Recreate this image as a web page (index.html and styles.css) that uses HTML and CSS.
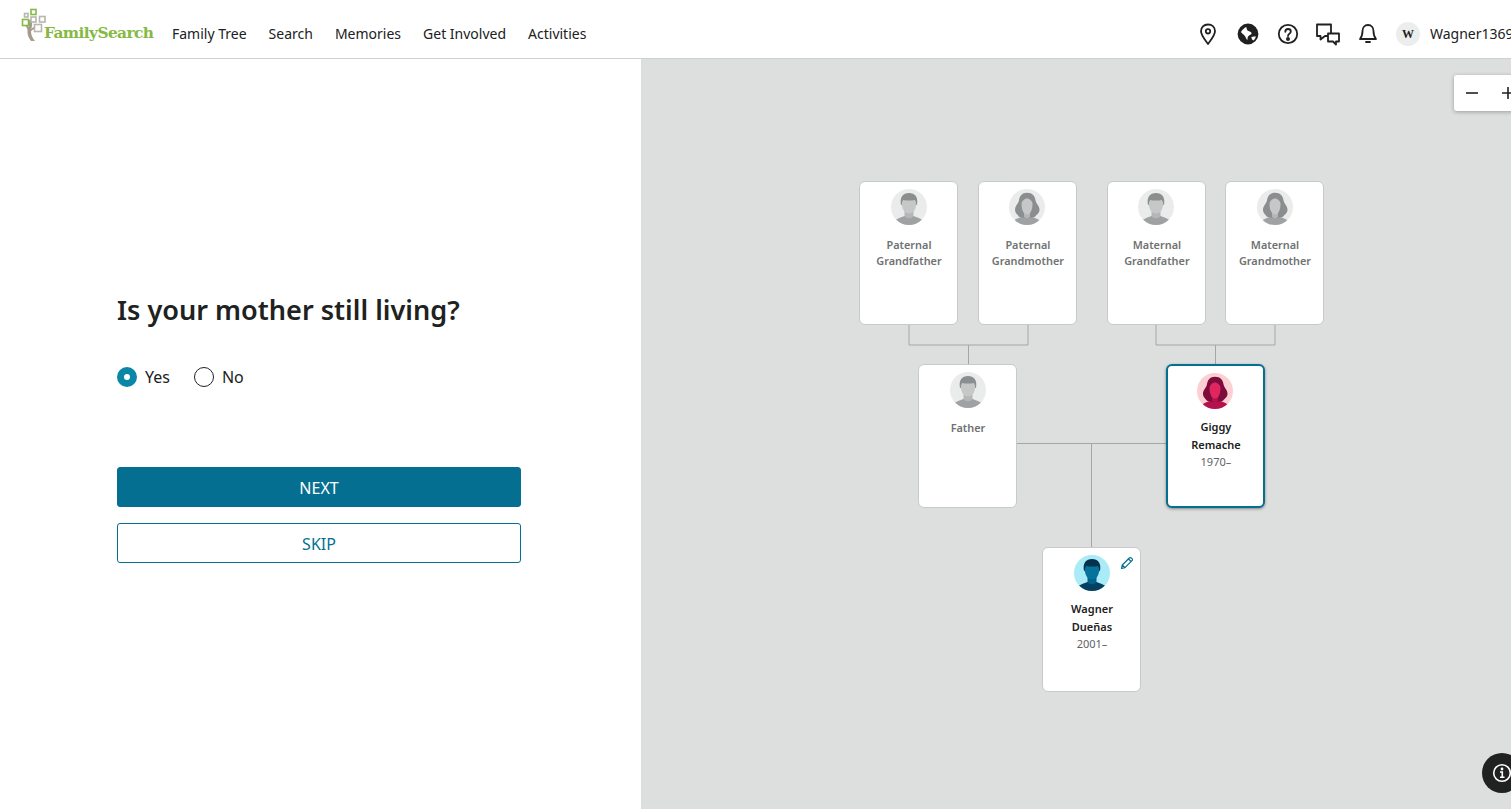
FILE: index.html
```html
<!DOCTYPE html>
<html lang="en">
<head>
    <meta charset="UTF-8">
    <meta name="viewport" content="width=device-width, initial-scale=1.0">
    <title>FamilySearch</title>
    <link rel="stylesheet" href="styles.css">
</head>
<body>
    <!-- shared avatar drawings -->
    <svg class="defs" width="0" height="0">
        <symbol id="man" viewBox="0 0 36 36">
            <path class="a-body" d="M4 31.500c2-2 6-3 9.500-4.500h9c3.500 1.500 7.500 2.500 9.500 4.500a18 18 0 0 1-28 0z"/>
            <path class="a-neck" d="M13.500 20h9v7c-1.500 3-7.500 3-9 0z"/>
            <path class="a-face" d="M10.500 12c0-3 15-3 15 0 0 7-2.500 12.500-7.500 12.500S10.500 19 10.500 12z"/>
            <path class="a-hair" d="M10 16c-1.500-8 2-12 8-12s9.500 4 8 12h-.8c0-2.500-.5-4-1.500-5-3 .8-8.400.8-11.400 0-1 1-1.500 2.500-1.500 5z"/>
        </symbol>
        <symbol id="woman" viewBox="0 0 36 36">
            <path class="a-body" d="M5 32c2-2.500 5-3 9-4.500h8c4 1.500 7 2 9 4.500a18 18 0 0 1-26 0z"/>
            <path class="a-hair" d="M18 3.700c5.500 0 8 3.500 8.500 7.500.3 3 4 5.500 4 9.500 0 3.500-3 4.800-4.500 7-4 1.500-12 1.500-16 0-1.500-2.200-4-3.500-4-7 0-4 3.700-6.500 4-9.500.5-4 3-7.500 8-7.500z"/>
            <path class="a-neck" d="M15 22h6v5.500c-1 2-5 2-6 0z"/>
            <path class="a-face" d="M12.500 15c0-3 3-5.500 5.500-5.500s5.500 2.500 5.500 5.500c0 5.500-2 10.500-5.500 10.500s-5.500-5-5.500-10.500z"/>
        </symbol>
    </svg>

    <header class="topbar">
        <div class="topbar-left">
            <a class="logo" href="#">
                <svg class="logo-tree" width="32" height="44" viewBox="0 0 32 44">
                    <path class="trunk" d="M11 20c1.500 3 1.500 5 .5 8-1 4-.5 8 3.500 13h-4c-2.500-3-4-7-3.500-11 .2-1.500-2-4-3-5l1-1c1 .8 2 2 3 3 .5-2 .3-4-.5-7z"/>
                    <path class="trunk" d="M11 29c1-1 3-2 4-3l1 1c-1 1-3 3-5 4z"/>
                    <rect class="sq-green" x="11" y="9.500" width="5" height="5"/>
                    <rect class="sq-grey" x="4.500" y="13.500" width="3.500" height="3.500"/>
                    <rect class="sq-grey" x="11" y="17" width="5" height="5"/>
                    <rect class="sq-grey" x="19.500" y="16.500" width="5.500" height="5.500"/>
                    <rect class="sq-green" x="2.500" y="19.500" width="6" height="6"/>
                    <rect class="sq-grey" x="14.500" y="24.500" width="7" height="7"/>
                </svg>
                <span class="logo-text">FamilySearch</span>
            </a>
            <nav class="mainnav">
                <a href="#">Family Tree</a>
                <a href="#">Search</a>
                <a href="#">Memories</a>
                <a href="#">Get Involved</a>
                <a href="#">Activities</a>
            </nav>
        </div>
        <div class="tools">
            <svg class="tool" viewBox="0 0 24 24"><path d="M12 2.500c-4.200 0-7 2.800-7 6.800 0 4 3.800 8.400 7 12.700 3.200-4.300 7-8.700 7-12.700 0-4-2.800-6.800-7-6.800z"/><circle cx="12" cy="9.300" r="2.200"/></svg>
            <svg class="tool" viewBox="0 0 24 24"><circle class="fill" cx="12" cy="12" r="9.500"/><path class="cut" d="M5 10c1-2 3-4 5-5 1 1 .5 2.500 1.500 3.500s3.500 1 4 2.500-2 2-3 3-1 2.500-1 4c-1.500-.5-1.500-3-3-4.500S6 11.500 5 10z"/><path class="cut" d="M15.500 15c1.500-.5 3-.5 4.500-.5-.5 1.500-1.500 3-2.500 4-1-.5-2.500-2-2-3.500z"/></svg>
            <svg class="tool" viewBox="0 0 24 24"><circle cx="12" cy="12" r="9.200"/><path d="M9.300 9.800c0-1.700 1.200-2.800 2.800-2.800s2.700 1 2.700 2.400c0 2.200-2.800 2.200-2.800 4.600"/><circle class="fill" cx="12" cy="17" r="1.100"/></svg>
            <svg class="tool" viewBox="0 0 24 24"><path d="M1 2.500h14v11.500h-6l-4.500 3.500v-3.500h-3.500z"/><path class="over" d="M12 11.500h11v8h-3v3l-3-3h-5z"/></svg>
            <svg class="tool" viewBox="0 0 24 24"><path d="M12 3c-3.500 0-5.500 2.700-5.500 6 0 4-.8 6-2.500 8h16c-1.700-2-2.500-4-2.500-8 0-3.300-2-6-5.500-6z"/><path d="M10 20h4"/></svg>
            <span class="user-badge">W</span>
            <span class="user-name">Wagner1369</span>
        </div>
    </header>

    <main class="page">
        <section class="question">
            <h1>Is your mother still living?</h1>
            <div class="choices">
                <label class="choice"><input type="radio" name="living" checked> Yes</label>
                <label class="choice"><input type="radio" name="living"> No</label>
            </div>
            <div class="actions">
                <button class="btn btn-next">NEXT</button>
                <button class="btn btn-skip">SKIP</button>
            </div>
        </section>

        <section class="tree">
            <div class="zoombox">
                <svg width="14" height="14" viewBox="0 0 14 14"><path d="M1 7h12"/></svg>
                <svg width="14" height="14" viewBox="0 0 14 14"><path d="M1 7h12M7 1v12"/></svg>
            </div>

            <!-- connector lines -->
            <svg class="lines" width="870" height="751">
                <path d="M268 266v20h119v-20M327.500 286v20"/>
                <path d="M515 266v20h119v-20M574.500 286v20"/>
                <path d="M376 384.500h149M450.500 384.500v104"/>
            </svg>

            <div class="card card-pgf">
                <svg class="avatar avatar-grey"><use href="#man"/></svg>
                <p class="role">Paternal Grandfather</p>
            </div>
            <div class="card card-pgm">
                <svg class="avatar avatar-grey"><use href="#woman"/></svg>
                <p class="role">Paternal Grandmother</p>
            </div>
            <div class="card card-mgf">
                <svg class="avatar avatar-grey"><use href="#man"/></svg>
                <p class="role">Maternal Grandfather</p>
            </div>
            <div class="card card-mgm">
                <svg class="avatar avatar-grey"><use href="#woman"/></svg>
                <p class="role">Maternal Grandmother</p>
            </div>
            <div class="card card-father">
                <svg class="avatar avatar-grey"><use href="#man"/></svg>
                <p class="role">Father</p>
            </div>
            <div class="card card-mother">
                <svg class="avatar avatar-red"><use href="#woman"/></svg>
                <p class="name">Giggy Remache</p>
                <p class="years">1970–</p>
            </div>
            <div class="card card-self">
                <svg class="pencil" width="14" height="14" viewBox="0 0 14 14"><path d="M1.500 12.500l.8-3.500 7-7c.6-.6 1.500-.6 2 0l.7.700c.6.600.6 1.400 0 2l-7 7zM2.300 9l2.700 2.700M8.500 3l2.500 2.500"/></svg>
                <svg class="avatar avatar-blue"><use href="#man"/></svg>
                <p class="name">Wagner Dueñas</p>
                <p class="years">2001–</p>
            </div>

            <div class="infobtn">
                <svg width="20" height="20" viewBox="0 0 20 20"><circle cx="10" cy="10" r="8.300"/><circle class="dot" cx="10" cy="6" r="1.400"/><path d="M8 9h2.300v5M8 14.200h4.500"/></svg>
            </div>
        </section>
    </main>
</body>
</html>
```

FILE: styles.css
```css
html, body {
    margin: 0;
    height: 100%;
    overflow: hidden;
}
body {
    font-family: "Noto Sans", sans-serif;
    color: #202121;
    background: #fff;
}
.defs {
    position: absolute;
}
p, h1 {
    margin: 0;
}
a {
    color: inherit;
    text-decoration: none;
}

/* top bar */
.topbar {
    display: grid;
    grid-template-columns: 1196px 1fr;
    height: 58px;
    border-bottom: 1px solid #cfd1d0;
    box-sizing: content-box;
}
.topbar-left {
    display: flex;
    align-items: flex-start;
}
.logo {
    display: flex;
    width: 172px;
    flex: none;
    padding-left: 20px;
    box-sizing: border-box;
}
.logo-tree {
    margin-right: -8px;
    flex: none;
}
.logo-text {
    font-family: "DejaVu Serif", serif;
    font-weight: 700;
    font-size: 15.4px;
    letter-spacing: -0.6px;
    color: #86b944;
    line-height: 18px;
    margin-top: 24px;
}
.trunk {
    fill: #a39c8b;
}
.sq-green, .sq-grey {
    fill: #fff;
    stroke-width: 1.6;
}
.sq-green {
    stroke: #86b944;
}
.sq-grey {
    stroke: #b9b6ae;
}
.mainnav {
    display: flex;
    gap: 22px;
    font-size: 14px;
    line-height: 20px;
    padding-top: 24px;
}
.tools {
    display: flex;
    align-items: center;
    overflow: hidden;
    white-space: nowrap;
    padding-top: 9px;
    height: 49px;
}
.tool {
    width: 24px;
    height: 24px;
    flex: none;
    margin-right: 16px;
    fill: none;
    stroke: #202121;
    stroke-width: 1.8;
    stroke-linejoin: round;
    stroke-linecap: round;
}
.tool .fill {
    fill: #202121;
}
.tool .cut {
    fill: #fff;
    stroke: none;
}
.tool .over {
    fill: #fff;
}
.user-badge {
    width: 24px;
    height: 24px;
    flex: none;
    border-radius: 50%;
    background: #eceeee;
    font-family: "Liberation Serif", serif;
    font-weight: 700;
    font-size: 12px;
    line-height: 24px;
    text-align: center;
    margin-right: 10px;
}
.user-name {
    font-size: 14px;
    flex: none;
}

/* page split */
.page {
    display: flex;
    height: 750px;
}
.question {
    width: 641px;
    flex: none;
    box-sizing: border-box;
    padding: 232px 120px 0 117px;
}
h1 {
    font-size: 27.1px;
    font-weight: 600;
    line-height: 38px;
}
.choices {
    display: flex;
    gap: 24px;
    margin-top: 38px;
    height: 20px;
}
.choice {
    display: flex;
    align-items: center;
    gap: 8px;
    font-size: 16px;
    line-height: 20px;
}
.choice input {
    appearance: none;
    width: 20px;
    height: 20px;
    margin: 0;
    box-sizing: border-box;
    border: 1px solid #202121;
    border-radius: 50%;
    background: #fff;
}
.choice input:checked {
    border: 7px solid #0a87a6;
}
.actions {
    display: flex;
    flex-direction: column;
    gap: 16px;
    margin-top: 80px;
}
.btn {
    height: 40px;
    padding-top: 2px;
    font-family: inherit;
    font-size: 16px;
    border-radius: 3px;
    border: 1px solid #056f92;
    cursor: pointer;
}
.btn-next {
    background: #056f92;
    color: #fff;
}
.btn-skip {
    background: #fff;
    color: #056f92;
}

/* tree canvas */
.tree {
    position: relative;
    flex: 1;
    background: #dddfde;
    overflow: hidden;
}
.lines {
    position: absolute;
    left: 0;
    top: 0;
    fill: none;
    stroke: #a4a7a6;
    stroke-width: 1;
}
.zoombox {
    position: absolute;
    left: 813px;
    top: 16px;
    width: 80px;
    height: 36px;
    box-sizing: border-box;
    padding: 11px 0 0 11px;
    display: flex;
    gap: 22px;
    background: #fff;
    border-radius: 3px;
    box-shadow: 0 1px 4px rgba(0, 0, 0, .3);
}
.zoombox svg {
    fill: none;
    stroke: #202121;
    stroke-width: 1.6;
}
.card {
    position: absolute;
    width: 99px;
    height: 144px;
    box-sizing: border-box;
    padding: 7px 6px 0;
    background: #fff;
    border: 1px solid #c8cac9;
    border-radius: 6px;
    text-align: center;
}
.card-pgf { left: 218px; top: 122px; }
.card-pgm { left: 336.9px; top: 122px; }
.card-mgf { left: 465.9px; top: 122px; }
.card-mgm { left: 584px; top: 122px; }
.card-father { left: 277px; top: 305px; }
.card-mother {
    left: 524.9px;
    top: 305px;
    border: 2px solid #04708f;
    box-shadow: 0 1px 3px rgba(0, 0, 0, .4);
}
.card-self { left: 401px; top: 488px; height: 145px; }
.avatar {
    display: block;
    width: 36px;
    height: 36px;
    margin: 0 auto;
    border-radius: 50%;
}
.avatar-grey { background: #eaecec; --body: #9fa2a2; --neck: #b4b7b7; --face: #c6c8c8; --hair: #8b8e8e; }
.avatar-red { background: #fccfd2; --body: #b5104e; --neck: #b5104e; --face: #e0265e; --hair: #7d0c3c; }
.avatar-blue { background: #a9ebf6; --body: #063f5f; --neck: #04618a; --face: #05739c; --hair: #05314d; }
.a-body { fill: var(--body); }
.a-neck { fill: var(--neck); }
.a-face { fill: var(--face); }
.a-hair { fill: var(--hair); }
.role {
    margin-top: 12px;
    padding-left: 1px;
    font-size: 10.9px;
    font-weight: 600;
    line-height: 16px;
    color: #6f7272;
}
.name {
    margin-top: 9px;
    font-size: 11px;
    font-weight: 600;
    line-height: 18px;
    color: #202121;
    padding: 0 11px 0 12px;
}
.years {
    padding-left: 1px;
    font-size: 11px;
    line-height: 16px;
    color: #5f6363;
}
.pencil {
    position: absolute;
    right: 6px;
    top: 8px;
    fill: none;
    stroke: #04708f;
    stroke-width: 1.2;
    stroke-linejoin: round;
}
.infobtn {
    position: absolute;
    left: 841px;
    top: 694px;
    width: 40px;
    height: 40px;
    padding: 10px;
    box-sizing: border-box;
    background: #202121;
    border-radius: 50%;
}
.infobtn svg {
    display: block;
    fill: none;
    stroke: #fff;
    stroke-width: 1.6;
}
.infobtn .dot {
    fill: #fff;
    stroke: none;
}
```
